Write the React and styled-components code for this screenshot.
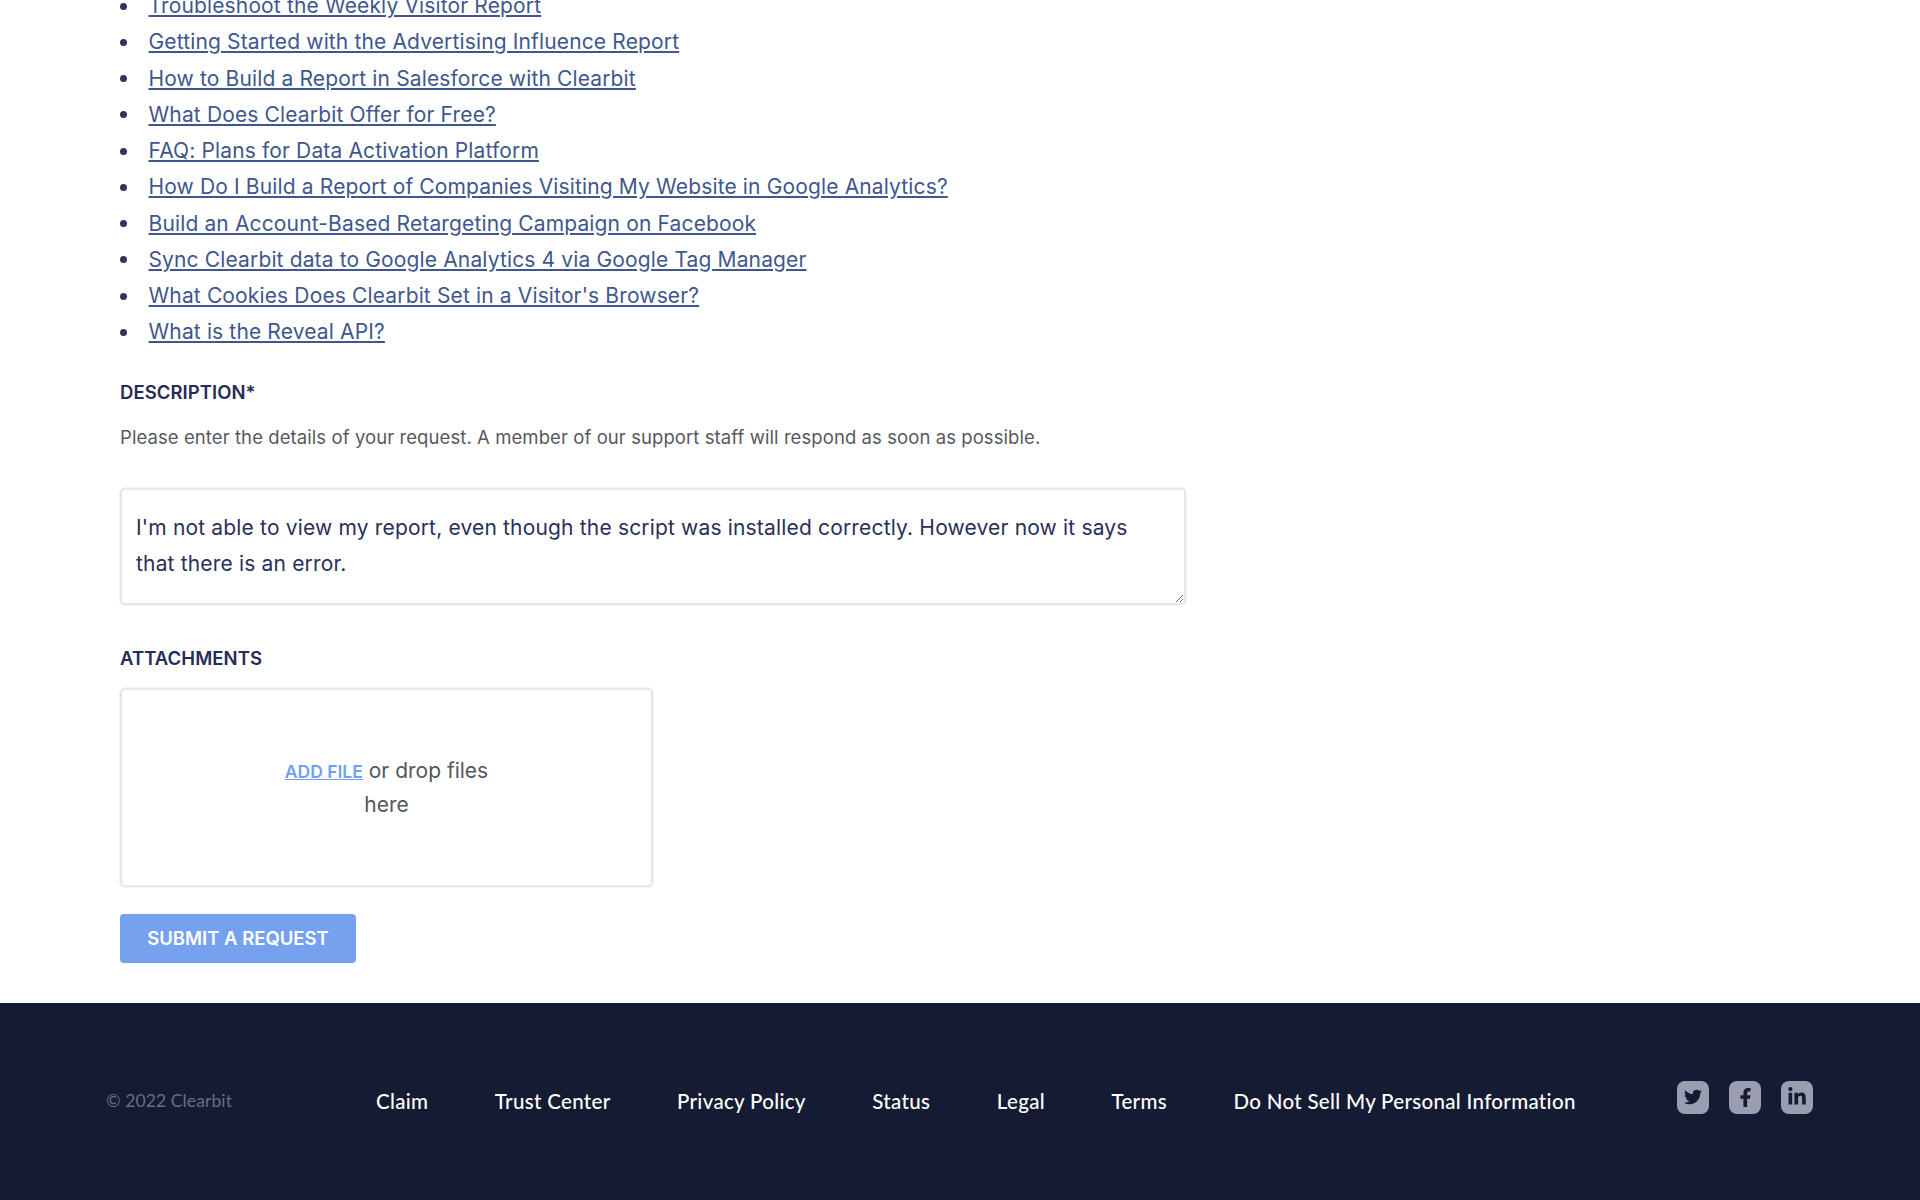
import React from 'react'
import styled, { createGlobalStyle } from 'styled-components'
import { FaTwitter, FaFacebookF, FaLinkedinIn } from 'react-icons/fa'

const GlobalStyle = createGlobalStyle`
  html, body {
    margin: 0;
    padding: 0;
    height: 1200px;
    overflow: hidden;
    background: #fff;
    font-family: Inter, 'Liberation Sans', sans-serif;
  }
`

const Page = styled.div`
  display: flex;
  flex-direction: column;
  height: 1200px;
  overflow: hidden;
`

const Main = styled.main`
  flex: 1;
  padding: 0 120px;
`

const ArticleList = styled.ul`
  margin: -12px 0 0;
  padding: 0;
  list-style: none;
  font-size: 21px;
  letter-spacing: 0.14px;
  line-height: 36.25px;
`

const ArticleItem = styled.li`
  display: flex;
  align-items: center;
  gap: 21.5px;

  &::before {
    content: '';
    width: 7px;
    height: 7px;
    border-radius: 50%;
    background: #2f3460;
  }
`

const ArticleLink = styled.a`
  color: #40578e;
  text-decoration: underline;
`

const FieldLabel = styled.label`
  display: block;
  margin-top: ${(p) => p.$top}px;
  color: #262b57;
  font-size: 18.5px;
  font-weight: 600;
  letter-spacing: 0.06px;
  line-height: 24px;
`

const HelpText = styled.p`
  margin: 21px 0 0;
  color: #555962;
  font-size: 18.5px;
  letter-spacing: 0.08px;
  line-height: 24px;
`

const Message = styled.textarea`
  display: block;
  box-sizing: border-box;
  width: 1066px;
  height: 117px;
  margin-top: 39px;
  padding: 20px 14px 0;
  border: 2px solid #e6e7ea;
  border-radius: 5px;
  box-shadow: 0 0 0 1px #f3f4f5;
  outline: none;
  color: #2a2f5b;
  font-family: Inter, 'Liberation Sans', sans-serif;
  font-size: 21px;
  letter-spacing: 0.17px;
  line-height: 36px;
`

const DropZone = styled.div`
  box-sizing: border-box;
  display: flex;
  align-items: center;
  justify-content: center;
  width: 533px;
  height: 199px;
  margin-top: 18px;
  padding: 0 150px;
  border: 2px solid #e6e7ea;
  border-radius: 5px;
  box-shadow: 0 0 0 1px #f3f4f5;
  color: #54575f;
  font-size: 21px;
  line-height: 33px;
  text-align: center;
`

const AddFile = styled.a`
  color: #729fee;
  font-size: 17.5px;
  font-weight: 600;
  text-decoration: underline;
`

const SubmitButton = styled.button`
  display: block;
  width: 236px;
  height: 49px;
  margin-top: 27px;
  padding: 0;
  border: 0;
  border-radius: 4px;
  background: #75a1ef;
  color: #fff;
  font-family: Inter, 'Liberation Sans', sans-serif;
  font-size: 18.5px;
  font-weight: 600;
`

const Footer = styled.footer`
  display: flex;
  align-items: center;
  height: 197px;
  padding: 0 107px 2px 106px;
  box-sizing: border-box;
  background: #151b33;
  font-family: Lato, 'Open Sans', sans-serif;
`

const Copyright = styled.span`
  width: 270px;
  color: #686d80;
  font-size: 17.5px;
  letter-spacing: 0.1px;
`

const FooterNav = styled.nav`
  display: flex;
  gap: 66.5px;
`

const FooterLink = styled.a`
  color: #fff;
  font-size: 20.5px;
  font-weight: 500;
  letter-spacing: 0.32px;
  text-decoration: none;
`

const Socials = styled.div`
  display: flex;
  gap: 20px;
  margin-left: auto;
  padding-bottom: 7px;
`

const SocialButton = styled.a`
  display: flex;
  align-items: center;
  justify-content: center;
  width: 32px;
  height: 33px;
  border-radius: 8px;
  background: #9a9eb0;
  color: #151b33;
  font-size: ${(p) => p.$size}px;
`

const articles = [
  'Troubleshoot the Weekly Visitor Report',
  'Getting Started with the Advertising Influence Report',
  'How to Build a Report in Salesforce with Clearbit',
  'What Does Clearbit Offer for Free?',
  'FAQ: Plans for Data Activation Platform',
  'How Do I Build a Report of Companies Visiting My Website in Google Analytics?',
  'Build an Account-Based Retargeting Campaign on Facebook',
  'Sync Clearbit data to Google Analytics 4 via Google Tag Manager',
  "What Cookies Does Clearbit Set in a Visitor's Browser?",
  'What is the Reveal API?',
]

const footerLinks = [
  'Claim',
  'Trust Center',
  'Privacy Policy',
  'Status',
  'Legal',
  'Terms',
  'Do Not Sell My Personal Information',
]

const App = () => (
  <Page>
    <GlobalStyle />
    <Main>
      <ArticleList>
        {articles.map((title) => (
          <ArticleItem key={title}>
            <ArticleLink href="#">{title}</ArticleLink>
          </ArticleItem>
        ))}
      </ArticleList>

      <FieldLabel $top={29}>DESCRIPTION*</FieldLabel>
      <HelpText>
        Please enter the details of your request. A member of our support staff
        will respond as soon as possible.
      </HelpText>
      <Message defaultValue="I'm not able to view my report, even though the script was installed correctly. However now it says that there is an error." />

      <FieldLabel $top={41}>ATTACHMENTS</FieldLabel>
      <DropZone>
        <span>
          <AddFile href="#">ADD FILE</AddFile> or drop files here
        </span>
      </DropZone>
      <SubmitButton>SUBMIT A REQUEST</SubmitButton>
    </Main>

    <Footer>
      <Copyright>© 2022 Clearbit</Copyright>
      <FooterNav>
        {footerLinks.map((label) => (
          <FooterLink key={label} href="#">
            {label}
          </FooterLink>
        ))}
      </FooterNav>
      <Socials>
        <SocialButton href="#" aria-label="Twitter" $size={18}>
          <FaTwitter />
        </SocialButton>
        <SocialButton href="#" aria-label="Facebook" $size={19}>
          <FaFacebookF />
        </SocialButton>
        <SocialButton href="#" aria-label="LinkedIn" $size={20}>
          <FaLinkedinIn />
        </SocialButton>
      </Socials>
    </Footer>
  </Page>
)

export default App
